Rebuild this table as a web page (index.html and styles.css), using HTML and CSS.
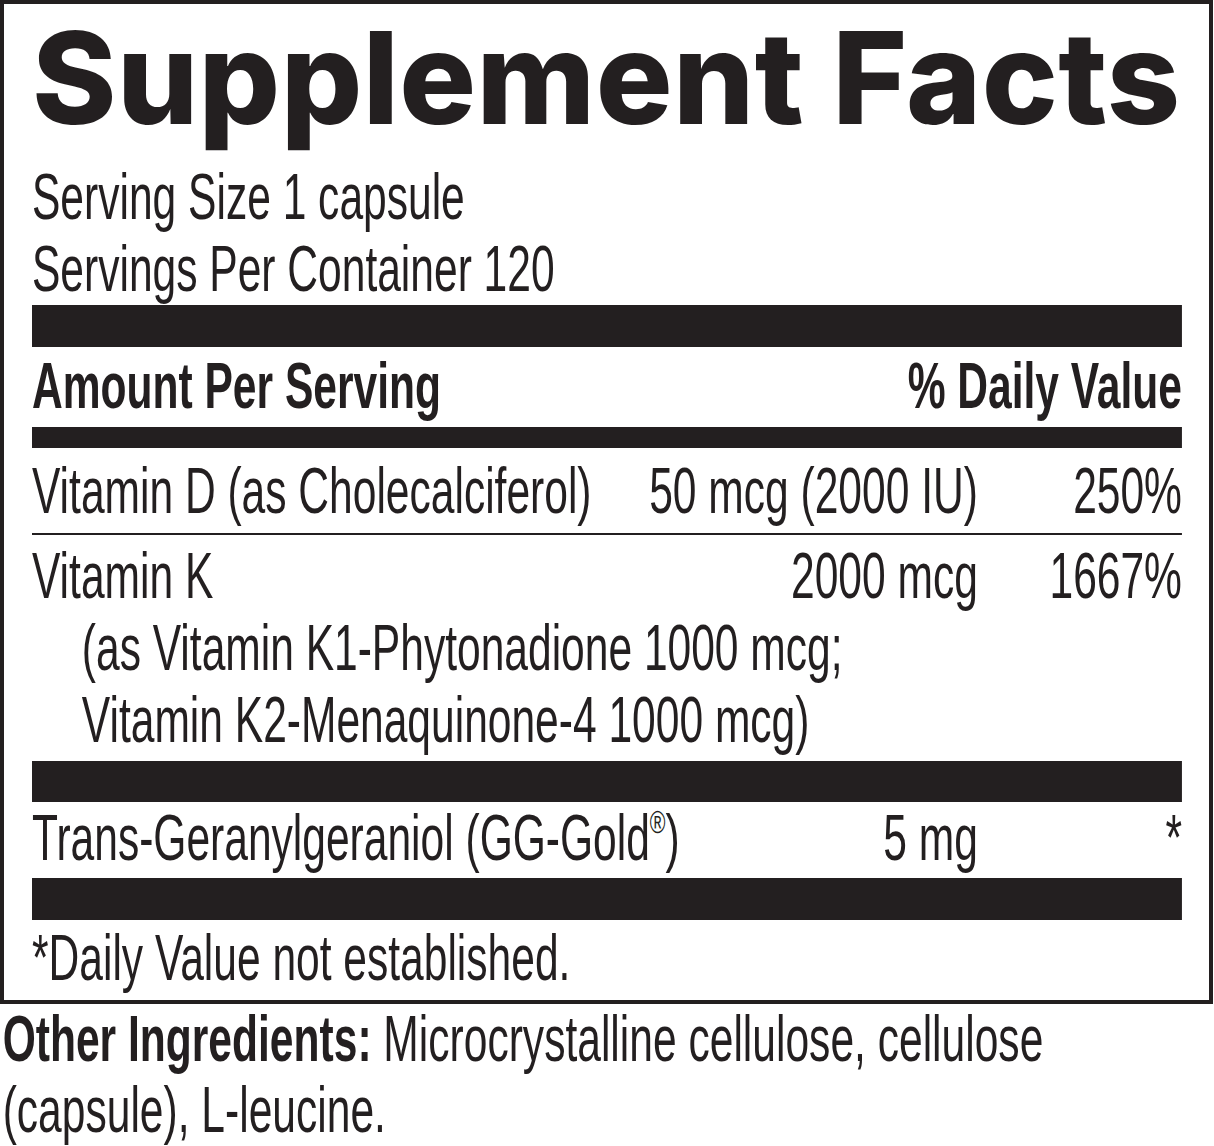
FILE: index.html
```html
<!DOCTYPE html>
<html lang="en">
<head>
<meta charset="utf-8">
<title>Supplement Facts</title>
<link rel="stylesheet" href="styles.css">
</head>
<body>
<main class="label">
  <section class="facts">
    <h1 class="facts-title">Supplement Facts</h1>
    <div class="facts-body">
      <div class="serving">
        <p class="line">Serving Size 1 capsule</p>
        <p class="line">Servings Per Container 120</p>
      </div>
      <div class="bar bar-thick bar-first"></div>
      <div class="row row-head">
        <span class="cell-name">Amount Per Serving</span>
        <span class="cell-dv">% Daily Value</span>
      </div>
      <div class="bar bar-medium"></div>
      <div class="row row-vitd">
        <span class="cell-name">Vitamin D (as Cholecalciferol)</span>
        <span class="cell-amount">50 mcg (2000 IU)</span>
        <span class="cell-dv">250%</span>
      </div>
      <div class="rule"></div>
      <div class="row row-vitk">
        <span class="cell-name">Vitamin K</span>
        <span class="cell-amount">2000 mcg</span>
        <span class="cell-dv">1667%</span>
      </div>
      <p class="line sub">(as Vitamin K1-Phytonadione 1000 mcg;</p>
      <p class="line sub">Vitamin K2-Menaquinone-4 1000 mcg)</p>
      <div class="bar bar-thick bar-k"></div>
      <div class="row row-gg">
        <span class="cell-name">Trans-Geranylgeraniol (GG-Gold<sup class="reg">®</sup>)</span>
        <span class="cell-amount">5 mg</span>
        <span class="cell-dv">*</span>
      </div>
      <div class="bar bar-thick bar-gg"></div>
      <p class="line footnote">*Daily Value not established.</p>
    </div>
  </section>
  <div class="other">
    <p class="other-text"><b class="other-label">Other Ingredients:</b> Microcrystalline cellulose, cellulose<br>(capsule), L-leucine.</p>
  </div>
</main>
</body>
</html>
```
FILE: styles.css
```css
html, body {
  margin: 0;
  padding: 0;
  background: #ffffff;
}

body {
  color: #231f20;
  font-family: "Liberation Sans", Arial, sans-serif;
  overflow: hidden;
}

.label {
  width: 1214px;
}

.facts {
  box-sizing: border-box;
  width: 1213px;
  border: 4px solid #231f20;
  padding: 13px 27px 6px 28px;
}

.facts-title {
  margin: 0;
  font-family: Inter, "Liberation Sans", sans-serif;
  font-weight: 800;
  font-size: 128px;
  line-height: 122px;
  letter-spacing: 0.4px;
  white-space: nowrap;
}

.facts-body {
  width: 1730px;
  margin-top: 22px;
  transform: scaleX(0.6647);
  transform-origin: 0 0;
  font-size: 64px;
  line-height: 72px;
}

.line {
  margin: 0;
  white-space: nowrap;
}

.bar {
  background: #231f20;
}

.bar-thick {
  height: 42px;
}

.bar-medium {
  height: 21px;
  margin-top: 5px;
}

.bar-k {
  height: 41px;
  margin-top: 5px;
}

.bar-gg {
  margin-top: 4px;
}

.row {
  display: grid;
  grid-template-columns: auto 1fr 307px;
  white-space: nowrap;
}

.cell-amount,
.cell-dv {
  text-align: right;
}

.row-head {
  display: flex;
  justify-content: space-between;
  margin-top: 3px;
  font-weight: 700;
}

.row-vitd {
  margin-top: 7px;
}

.rule {
  height: 2px;
  margin-top: 6px;
  background: #231f20;
}

.row-vitk {
  margin-top: 5px;
}

.sub {
  padding-left: 75px;
}

.reg {
  font-size: 0.5em;
  line-height: 0;
  vertical-align: 0.85em;
}

.footnote {
  margin-top: 2px;
}

.other {
  width: 1826px;
  transform: scaleX(0.665);
  transform-origin: 0 0;
  padding-left: 4px;
}

.other-text {
  margin: 0;
  font-size: 64px;
  line-height: 71px;
  white-space: nowrap;
}

.other-label {
  font-weight: 700;
}
```
